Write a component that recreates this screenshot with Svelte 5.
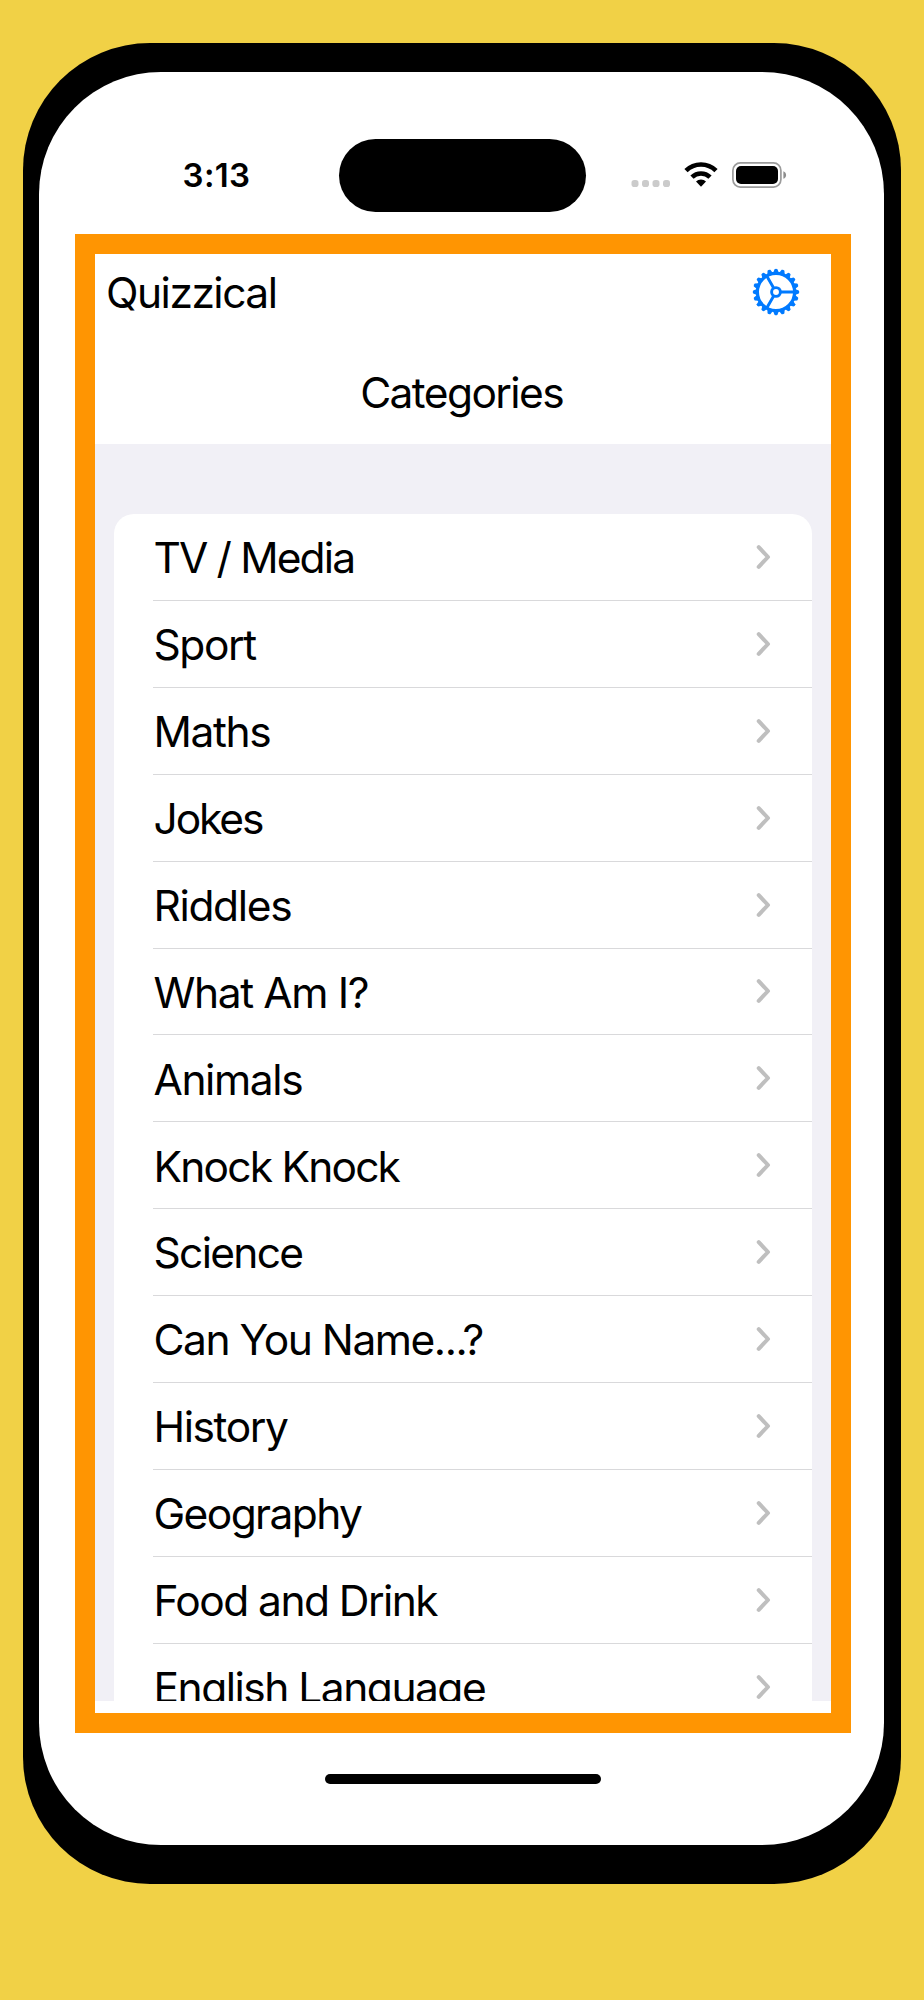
<script>
  // Each entry holds its label and its tracking in pixels.
  const categories = [
    ['TV / Media', -1.86], ['Sport', -1.4], ['Maths', -1.4], ['Jokes', -2.1],
    ['Riddles', -1.35], ['What Am I?', -1.38], ['Animals', -1.4],
    ['Knock Knock', -1.8], ['Science', -1.7], ['Can You Name...?', -1.47],
    ['History', -1.4], ['Geography', -1.6], ['Food and Drink', -1.55],
    ['English Language', -1.5]
  ];
  const teeth = Array.from({ length: 20 }, (_, i) => i * 18);
</script>

<div class="page">
  <div class="phone">
    <div class="screen">
      <div class="status">
        <span class="time">3:13</span>
        <span class="island"></span>
        <svg class="indicators" width="160" height="36" viewBox="0 0 160 36">
          <g fill="#cbcbcb">
            <rect x="1.5" y="20" width="7" height="7" rx="2.8" />
            <rect x="12" y="20" width="7" height="7" rx="2.8" />
            <rect x="22.5" y="20" width="7" height="7" rx="2.8" />
            <rect x="33" y="20" width="7" height="7" rx="2.8" />
          </g>
          <g fill="none" stroke="#000" stroke-width="4.6">
            <path d="M56 10.7a21.3 21.3 0 0 1 30 0" />
            <path d="M62 17.2a12.8 12.8 0 0 1 18 0" />
          </g>
          <path d="M66 21.5a7 7 0 0 1 10 0L71 26.8z" />
          <rect x="102.9" y="2.9" width="48" height="24.2" rx="7.5" fill="none" stroke="#9b9b9b" stroke-width="1.7" />
          <rect x="106" y="6" width="42" height="18" rx="5" />
          <path d="M153.4 11.2c3.6 1.3 3.6 6.3 0 7.6z" fill="#8d8d8d" />
        </svg>
      </div>
      <main class="app">
        <header class="bar">
          <span>Quizzical</span>
          <svg width="50" height="50" viewBox="-25 -25 50 50">
            <g fill="none" stroke="#007aff" stroke-width="3.2">
              <circle r="18.6" />
              <circle r="4.4" stroke-width="2.9" />
              <path d="M5 0H18.5M-2.5 -4.33L-9.25 -16.02M-2.5 4.33L-9.25 16.02" stroke-width="2.9" />
            </g>
            {#each teeth as angle}
              <path d="M19 -2.9L22.8 -1.5Q23.8 0 22.8 1.5L19 2.9z" fill="#007aff" transform="rotate({angle})" />
            {/each}
          </svg>
        </header>
        <h1>Categories</h1>
        <section class="list">
          <ul>
            {#each categories as [name, tracking]}
              <li>
                <span style="letter-spacing: {tracking}px">{name}</span>
                <svg width="18" height="28" viewBox="0 0 18 28">
                  <path d="M3.7 4.1L13 14L3.7 23.9" fill="none" stroke="#bfbfbf" stroke-width="4" stroke-linecap="round" stroke-linejoin="round" />
                </svg>
              </li>
            {/each}
          </ul>
        </section>
      </main>
      <div class="home"></div>
    </div>
  </div>
</div>

<style>
  :global(body) { margin: 0; background: #f1d146; }
  .page {
    height: 2000px;
    box-sizing: border-box;
    padding: 42.6px 23px 0;
    background: #f1d146;
    font-family: Inter, 'Liberation Sans', sans-serif;
    color: #000;
  }
  .phone {
    height: 1841.8px;
    box-sizing: border-box;
    padding: 29.4px 17.3px 39px 15.6px;
    border-radius: 127px;
    background: #000;
  }
  .screen {
    height: 100%;
    display: flex;
    flex-direction: column;
    background: #fff;
    border-radius: 122px;
  }
  .status {
    display: grid;
    grid-template-columns: 300.4px 247.5px 1fr;
    height: 162px;
    box-sizing: border-box;
    padding-top: 67.3px;
    flex: none;
  }
  .time {
    padding-left: 144px;
    font-size: 33px;
    font-weight: 600;
    line-height: 73px;
    letter-spacing: 0.3px;
  }
  .island { height: 73px; border-radius: 37px; background: #000; }
  .indicators { margin: 21px 0 0 43.5px; }
  .app {
    height: 1459px;
    flex: none;
    margin: 0 32.5px 0 36.4px;
    border: 20px solid #ff9502;
    display: flex;
    flex-direction: column;
  }
  .bar {
    height: 78px;
    flex: none;
    box-sizing: border-box;
    display: flex;
    align-items: center;
    justify-content: space-between;
    padding: 0 30.5px 1.8px 11px;
    font-size: 42.5px;
    letter-spacing: -1.5px;
  }
  h1 {
    margin: 0;
    padding-right: 3px;
    height: 112px;
    flex: none;
    line-height: 122px;
    text-align: center;
    font-size: 42.5px;
    font-weight: 400;
    letter-spacing: -1.6px;
  }
  .list {
    height: 1257px;
    flex: none;
    box-sizing: border-box;
    overflow: hidden;
    padding: 70px 19.5px 0;
    background: #f1f0f6;
  }
  ul {
    margin: 0;
    padding: 0;
    list-style: none;
    background: #fff;
    border-radius: 20px 20px 0 0;
  }
  li {
    height: 86.92px;
    box-sizing: border-box;
    margin-left: 39px;
    padding-right: 38.5px;
    display: flex;
    align-items: center;
    justify-content: space-between;
    border-bottom: 1px solid #d9d9db;
    font-size: 42.5px;
  }
  li span { padding-top: 1.6px; }
  .home {
    width: 276px;
    height: 10px;
    margin: 41.5px 0 0 286.2px;
    border-radius: 5px;
    background: #000;
  }
</style>
